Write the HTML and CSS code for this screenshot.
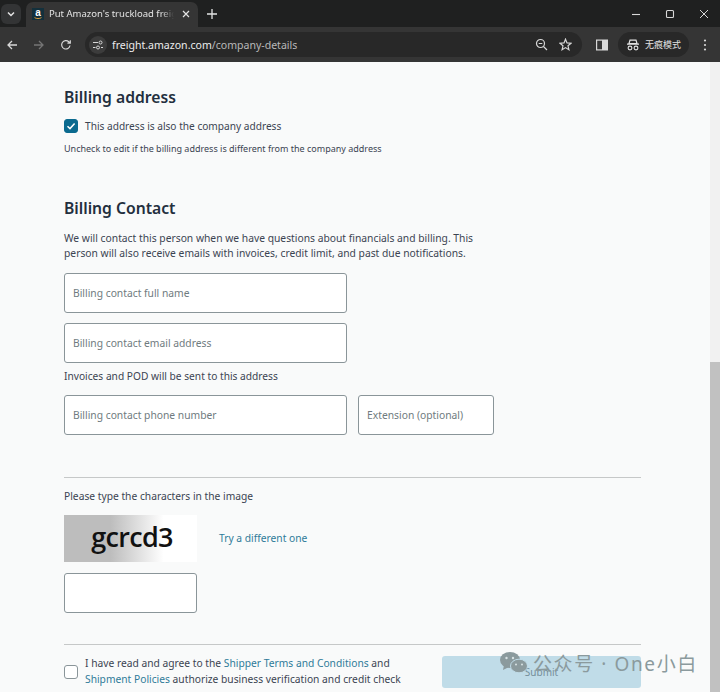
FILE: index.html
```html
<!DOCTYPE html>
<html lang="en">
<head>
    <meta charset="UTF-8">
    <title>Put Amazon's truckload freight</title>
    <link rel="stylesheet" href="styles.css">
</head>
<body>
    <div class="browser">
        <div class="tab-strip">
            <button class="tab-search">
                <svg width="10" height="10" viewBox="0 0 10 10"><path d="M2 3.5 5 6.5 8 3.5" fill="none" stroke="#e3e3e3" stroke-width="1.5"/></svg>
            </button>
            <div class="tab">
                <span class="favicon">
                    <svg width="12" height="12" viewBox="0 0 12 12"><path d="M2.5 9.6c2 1.3 5 1.3 7 0" fill="none" stroke="#e8a33d" stroke-width=".9"/></svg>
                    <b>a</b>
                </span>
                <span class="tab-title">Put Amazon's truckload freight</span>
                <svg class="tab-close" width="8" height="8" viewBox="0 0 8 8"><path d="M1 1 7 7M7 1 1 7" stroke="#e3e3e3" stroke-width="1.2"/></svg>
            </div>
            <svg class="new-tab" width="10" height="10" viewBox="0 0 10 10"><path d="M5 0V10M0 5H10" stroke="#e3e3e3" stroke-width="1.3"/></svg>
            <div class="window-btns">
                <svg width="10" height="10" viewBox="0 0 10 10"><path d="M1 5.5H9" stroke="#d8d8d8" stroke-width="1.1"/></svg>
                <svg width="10" height="10" viewBox="0 0 10 10"><rect x="1.5" y="1.5" width="7" height="7" rx="1" fill="none" stroke="#d8d8d8" stroke-width="1.1"/></svg>
                <svg width="10" height="10" viewBox="0 0 10 10"><path d="M1 1 9 9M9 1 1 9" stroke="#d8d8d8" stroke-width="1"/></svg>
            </div>
        </div>
        <div class="toolbar">
            <svg width="12" height="12" viewBox="0 0 12 12"><path d="M11 6H2M6 2 2 6l4 4" fill="none" stroke="#d8d8d8" stroke-width="1.3"/></svg>
            <svg width="12" height="12" viewBox="0 0 12 12"><path d="M1 6H10M6 2l4 4-4 4" fill="none" stroke="#757575" stroke-width="1.3"/></svg>
            <svg width="12" height="12" viewBox="0 0 12 12"><path d="M10 6.5A4.2 4.2 0 1 1 8.8 2.8L10.3 4.2M10.3 1.2V4.2H7.4" fill="none" stroke="#d8d8d8" stroke-width="1.2"/></svg>
            <div class="omnibox">
                <span class="site-info">
                    <svg width="12" height="12" viewBox="0 0 12 12"><path d="M1 3.5H6M1 8.5H3.5M9 8.5H11" stroke="#d8d8d8" stroke-width="1.2"/><circle cx="8.5" cy="3.5" r="1.5" fill="none" stroke="#d8d8d8"/><circle cx="6" cy="8.5" r="1.5" fill="none" stroke="#d8d8d8"/></svg>
                </span>
                <span class="url"><span class="url-host">freight.amazon.com</span>/company-details</span>
                <svg class="zoom-icon" width="13" height="13" viewBox="0 0 13 13"><circle cx="5.5" cy="5.5" r="4" fill="none" stroke="#d8d8d8" stroke-width="1.2"/><path d="M8.5 8.5 12 12M3.7 5.5H7.3" stroke="#d8d8d8" stroke-width="1.2"/></svg>
                <svg width="13" height="13" viewBox="0 0 13 13"><path d="M6.5 1.2 8 4.9l4 .3-3 2.6.9 3.9-3.4-2.1-3.4 2.1.9-3.9-3-2.6 4-.3z" fill="none" stroke="#d8d8d8" stroke-width="1.2"/></svg>
            </div>
            <svg class="side-panel" width="12" height="12" viewBox="0 0 12 12"><rect x=".6" y="1.1" width="10.8" height="9.8" fill="none" stroke="#d8d8d8" stroke-width="1.2"/><rect x="6" y="1" width="5.5" height="10" fill="#d8d8d8"/></svg>
            <div class="incognito">
                <svg width="12" height="12" viewBox="0 0 12 12"><path d="M3 1.2h6l1 3.3H2zM0 5.2h12" fill="none" stroke="#e3e3e3" stroke-width="1.2"/><circle cx="3" cy="9" r="1.9" fill="none" stroke="#e3e3e3" stroke-width="1.1"/><circle cx="9" cy="9" r="1.9" fill="none" stroke="#e3e3e3" stroke-width="1.1"/></svg>
                <span>无痕模式</span>
            </div>
            <svg class="menu-dots" width="4" height="12" viewBox="0 0 4 12"><circle cx="2" cy="1.5" r="1.1" fill="#d8d8d8"/><circle cx="2" cy="6" r="1.1" fill="#d8d8d8"/><circle cx="2" cy="10.5" r="1.1" fill="#d8d8d8"/></svg>
        </div>
    </div>

    <div class="viewport">
        <main class="page">
            <h2 class="first-title">Billing address</h2>
            <label class="check-row">
                <span class="checkbox checked">
                    <svg width="10" height="10" viewBox="0 0 10 10"><path d="M1.5 5.2 4 7.6 8.6 2.6" fill="none" stroke="#fff" stroke-width="1.5"/></svg>
                </span>
                This address is also the company address
            </label>
            <p class="hint">Uncheck to edit if the billing address is different from the company address</p>

            <h2 class="second-title">Billing Contact</h2>
            <p class="intro">We will contact this person when we have questions about financials and billing. This person will also receive emails with invoices, credit limit, and past due notifications.</p>
            <div class="field field-wide">Billing contact full name</div>
            <div class="field field-wide email-field">Billing contact email address</div>
            <p class="note">Invoices and POD will be sent to this address</p>
            <div class="phone-row">
                <div class="field field-wide">Billing contact phone number</div>
                <div class="field field-ext">Extension (optional)</div>
            </div>

            <hr class="rule captcha-rule">
            <p class="captcha-label">Please type the characters in the image</p>
            <div class="captcha-row">
                <div class="captcha-img">gcrcd3</div>
                <a class="link try-link">Try a different one</a>
            </div>
            <div class="field field-captcha"></div>

            <hr class="rule terms-rule">
            <div class="terms-row">
                <span class="checkbox"></span>
                <p class="terms">I have read and agree to the <a class="link">Shipper Terms and Conditions</a> and <a class="link">Shipment Policies</a> authorize business verification and credit check</p>
                <button class="submit">Submit</button>
            </div>
        </main>
        <div class="scrollbar"><div class="thumb"></div></div>
    </div>

    <!-- 水印 -->
    <div class="watermark">
        <svg width="28" height="22" viewBox="0 0 28 22"><ellipse cx="10" cy="8" rx="10" ry="8" fill="#8b9a9d"/><path d="M4 13 3 18l6-3z" fill="#8b9a9d"/><ellipse cx="19" cy="14" rx="8.5" ry="6.8" fill="#8b9a9d" stroke="#c0dce8"/><circle cx="6.5" cy="6" r="1.2" fill="#d8e2e4"/><circle cx="13" cy="6" r="1.2" fill="#d8e2e4"/><circle cx="16" cy="12.5" r="1" fill="#d8e2e4"/><circle cx="22" cy="12.5" r="1" fill="#d8e2e4"/></svg>
        <span>公众号 · One小白</span>
    </div>
</body>
</html>
```

FILE: styles.css
```css
* {
    box-sizing: border-box;
}

html, body {
    height: 692px;
    margin: 0;
    overflow: hidden;
}

body {
    position: relative;
    font-family: "Noto Sans", "Noto Sans CJK SC", sans-serif;
    background-color: #f9fafa;
    color: #232f3e;
}

.tab-strip {
    display: flex;
    align-items: center;
    height: 27px;
    background-color: #1f2020;
}

.tab-search {
    display: flex;
    align-items: center;
    justify-content: center;
    width: 20px;
    height: 20px;
    margin-left: 1px;
    padding: 0;
    border: none;
    border-radius: 6px;
    background-color: #333435;
}

.tab {
    display: flex;
    align-items: center;
    width: 172px;
    height: 25px;
    margin: 2px 0 0 5px;
    padding: 0 8px 2px 6px;
    border-radius: 7px 7px 0 0;
    background-color: #353535;
}

.favicon {
    position: relative;
    display: flex;
    justify-content: center;
    flex: none;
    width: 12px;
    height: 12px;
    background-color: #13303c;
    color: #fff;
    font-family: "Liberation Sans", sans-serif;
    font-size: 10px;
    line-height: 9px;
}

.favicon svg {
    position: absolute;
    left: 0;
    top: 0;
}

.tab-title {
    flex: 1;
    margin-left: 5px;
    overflow: hidden;
    white-space: nowrap;
    color: #e3e3e3;
    font-size: 9.5px;
    -webkit-mask-image: linear-gradient(to right, #000 90%, transparent);
    mask-image: linear-gradient(to right, #000 90%, transparent);
}

.tab-close {
    flex: none;
    margin-left: 8px;
}

.new-tab {
    margin-left: 9px;
}

.window-btns {
    display: flex;
    gap: 24px;
    margin-left: auto;
    margin-right: 11px;
}

.toolbar {
    display: flex;
    align-items: center;
    height: 35px;
    padding: 0 12px 0 6px;
    gap: 15px;
    background-color: #353535;
}

.omnibox {
    display: flex;
    align-items: center;
    gap: 11px;
    flex: none;
    width: 497px;
    height: 25px;
    margin-left: -2px;
    padding: 0 10px 0 4px;
    border-radius: 13px;
    background-color: #282828;
}

.site-info {
    display: flex;
    align-items: center;
    justify-content: center;
    flex: none;
    width: 18px;
    height: 18px;
    border-radius: 50%;
    background-color: #3c3c3c;
}

.url {
    flex: 1;
    margin-left: -6px;
    color: #b8b8b8;
    font-size: 10.55px;
}

.url-host {
    color: #ececec;
}

.side-panel {
    flex: none;
    margin-left: -1px;
}

.incognito {
    display: flex;
    align-items: center;
    gap: 6px;
    flex: none;
    height: 25px;
    margin-left: -5px;
    padding: 0 8px 0 9px;
    border-radius: 13px;
    background-color: #282828;
    color: #e3e3e3;
    font-size: 9px;
    white-space: nowrap;
}

.menu-dots {
    flex: none;
    margin-left: -1px;
}

.viewport {
    display: flex;
    height: 630px;
    overflow: hidden;
}

.page {
    flex: 1;
    padding: 26px 69px 0 64px;
}

h2 {
    margin: 0;
    font-size: 15.7px;
    font-weight: 600;
    line-height: 18px;
}

.check-row {
    display: flex;
    align-items: center;
    gap: 7px;
    margin-top: 13px;
    font-size: 10.15px;
    line-height: 14px;
    color: #3b4452;
}

.checkbox {
    display: flex;
    align-items: center;
    justify-content: center;
    flex: none;
    width: 14px;
    height: 14px;
    border: 1px solid #8a9599;
    border-radius: 3px;
    background-color: #fff;
}

.checkbox.checked {
    border-color: #0b6a8f;
    background-color: #0b6a8f;
}

.hint {
    margin: 9px 0 0;
    font-size: 9px;
    line-height: 14px;
    color: #3b4452;
}

.second-title {
    margin-top: 43px;
}

.intro {
    width: 420px;
    margin: 14px 0 0;
    font-size: 10.3px;
    line-height: 15px;
    color: #3b4452;
}

.field {
    display: flex;
    align-items: center;
    height: 40px;
    padding: 0 8px;
    border: 1px solid #8a9599;
    border-radius: 3px;
    background-color: #fff;
    color: #6f7b80;
    font-size: 10.3px;
}

.field-wide {
    flex: none;
    width: 283px;
}

.intro + .field {
    margin-top: 12px;
}

.email-field {
    margin-top: 10px;
}

.note {
    margin: 6px 0 0;
    font-size: 10.2px;
    line-height: 15px;
    color: #3b4452;
}

.phone-row {
    display: flex;
    gap: 11px;
    margin-top: 11px;
}

.field-ext {
    width: 136px;
}

.rule {
    height: 1px;
    margin: 0;
    border: none;
    background-color: #c6c8c8;
}

.captcha-rule {
    margin-top: 42px;
}

.captcha-label {
    margin: 11px 0 0;
    font-size: 10.25px;
    line-height: 15px;
    color: #3b4452;
}

.captcha-row {
    display: flex;
    align-items: center;
    gap: 22px;
    margin-top: 11px;
}

.captcha-img {
    width: 133px;
    height: 47px;
    padding-left: 3px;
    background: linear-gradient(to right, #bdbdbd 35%, #fff 75%);
    color: #111;
    font-family: "Open Sans", sans-serif;
    font-size: 27px;
    font-weight: 600;
    letter-spacing: -.7px;
    line-height: 44px;
    text-align: center;
}

.link {
    color: #2f7a99;
    font-size: 10.25px;
}

.try-link {
    margin-bottom: 2px;
}

.field-captcha {
    width: 133px;
    margin-top: 11px;
}

.terms-rule {
    margin-top: 31px;
}

.terms-row {
    display: flex;
    align-items: center;
    margin-top: 10px;
}

.terms {
    width: 340px;
    margin: 0 0 0 7px;
    padding-bottom: 2px;
    font-size: 10.25px;
    line-height: 16px;
    color: #3b4452;
}

.submit {
    width: 199px;
    height: 32px;
    margin-left: 17px;
    border: none;
    border-radius: 3px;
    background-color: #c0dce8;
    color: #748d99;
    font-family: inherit;
    font-size: 10px;
}

.scrollbar {
    flex: none;
    width: 10px;
    background-color: #f1f1f1;
    padding-top: 300px;
}

.thumb {
    height: 330px;
    background-color: #c1c1c1;
}

.watermark {
    position: absolute;
    left: 500px;
    top: 649px;
    display: flex;
    align-items: center;
    gap: 5px;
    color: #8b9a9d;
    font-size: 19px;
    letter-spacing: 1.6px;
    white-space: nowrap;
}
```
